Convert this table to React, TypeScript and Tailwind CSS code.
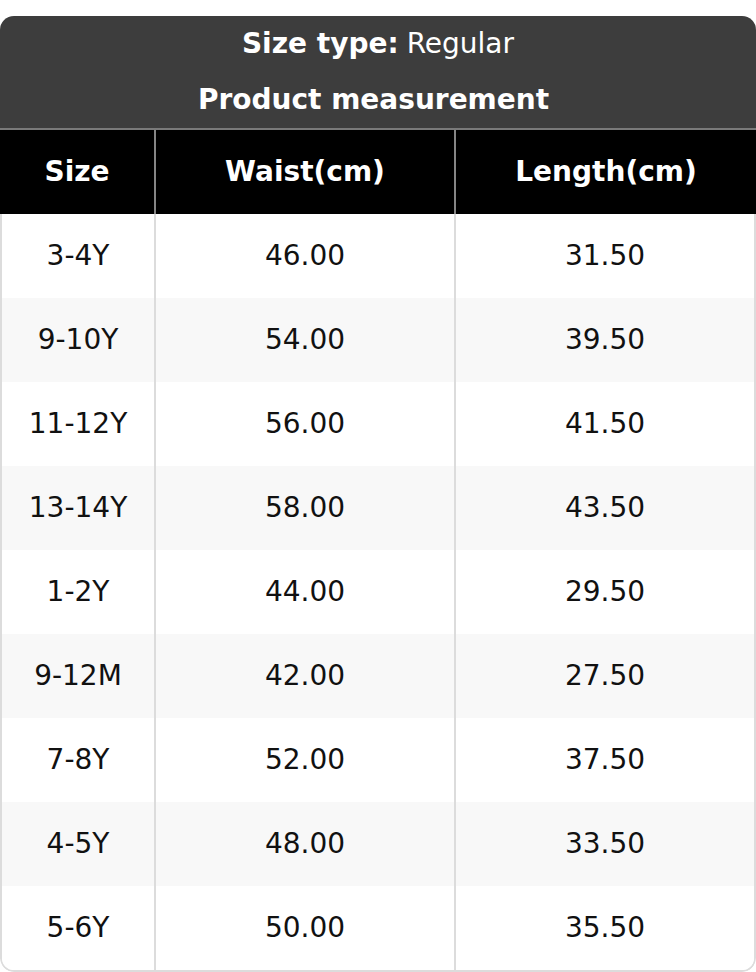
const rows = [
  ["3-4Y", "46.00", "31.50"],
  ["9-10Y", "54.00", "39.50"],
  ["11-12Y", "56.00", "41.50"],
  ["13-14Y", "58.00", "43.50"],
  ["1-2Y", "44.00", "29.50"],
  ["9-12M", "42.00", "27.50"],
  ["7-8Y", "52.00", "37.50"],
  ["4-5Y", "48.00", "33.50"],
  ["5-6Y", "50.00", "35.50"],
];

const SizeChart = () => {
  return (
    <div className="bg-white pt-4 font-['DejaVu_Sans',sans-serif] text-[28px]">
      <div className="rounded-[14px] overflow-hidden">
        <div className="bg-[#3d3d3d] text-white text-center">
          <div className="h-[56px] flex items-center justify-center">
            <span className="font-bold">Size type:</span>
            <span className="ml-2">Regular</span>
          </div>
          <div className="h-[56px] flex items-center justify-center font-bold pr-[9px]">Product measurement</div>
        </div>
        <div className="border-t-2 border-[#7a7a7a]">
          <div className="grid grid-cols-[156px_300px_1fr] h-[84px] bg-black text-white font-bold">
            <div className="flex items-center justify-center border-r-2 border-[#858585]">Size</div>
            <div className="flex items-center justify-center border-r-2 border-[#858585]">Waist(cm)</div>
            <div className="flex items-center justify-center">Length(cm)</div>
          </div>
          <div className="border-x-2 border-b-2 border-[#dcdcdc] rounded-b-[14px] overflow-hidden text-[#111]">
            {rows.map((r, i) => (
              <div
                key={r[0]}
                className={`grid grid-cols-[154px_300px_1fr] h-[84px] ${i % 2 === 1 ? "bg-[#f8f8f8]" : "bg-white"}`}
              >
                <div className="flex items-center justify-center border-r-2 border-[#dcdcdc]">{r[0]}</div>
                <div className="flex items-center justify-center border-r-2 border-[#dcdcdc]">{r[1]}</div>
                <div className="flex items-center justify-center">{r[2]}</div>
              </div>
            ))}
          </div>
        </div>
      </div>
    </div>
  );
};

export default SizeChart;
